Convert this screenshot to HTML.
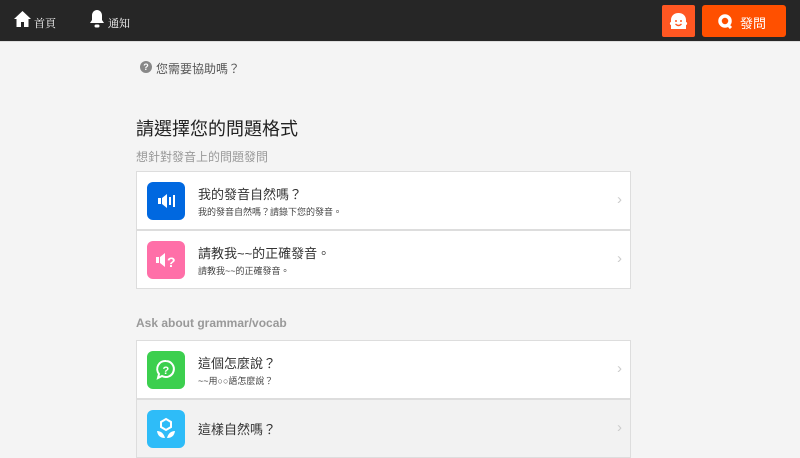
<!DOCTYPE html>
<html><head><meta charset="utf-8"><style>
*{margin:0;padding:0;box-sizing:border-box}
body{width:800px;height:458px;overflow:hidden;background:#f4f4f4;font-family:"Liberation Sans","Noto Sans CJK TC",sans-serif;position:relative}
.hdr{position:absolute;left:0;top:0;width:800px;height:42px;background:#262626;border-bottom:1px solid #ddd}
.t{position:absolute;white-space:nowrap}
.card{position:absolute;left:136px;width:495px;height:59px;background:#fff;border:1px solid #ddd}
.ic{position:absolute;left:10px;top:10px;width:38px;height:38px;border-radius:6px}
.ti{position:absolute;left:61px;top:12px;font-size:13px;color:#333}
.su{position:absolute;left:61px;top:33px;font-size:9px;color:#444}
.ar{position:absolute;right:8px;top:19px;font-size:15px;color:#ccc}
</style></head><body>
<div class="hdr">
<svg style="position:absolute;left:14px;top:11px" width="17" height="16" viewBox="0 0 17 16"><path d="M8.5 0L0 8h2.5v8h4.5v-5h3v5h4.5V8H17z" fill="#fff"/></svg>
<div class="t" style="left:34px;top:15px;font-size:11px;color:#fff;font-family:'Noto Serif CJK SC',serif">首頁</div>
<svg style="position:absolute;left:89px;top:10px" width="16" height="18" viewBox="0 0 16 18"><path d="M8 0c-3 0-5 2.5-5 5.5V10L1 13h14l-2-3V5.5C13 2.5 11 0 8 0z" fill="#fff"/><rect x="5.5" y="14.5" width="5" height="3" rx="1.5" fill="#fff"/></svg>
<div class="t" style="left:108px;top:15px;font-size:11px;color:#fff;font-family:'Noto Serif CJK SC',serif">通知</div>
<div style="position:absolute;left:662px;top:5px;width:33px;height:32px;background:#ff5722;border-radius:2px">
<svg style="position:absolute;left:7px;top:7px" width="19" height="18" viewBox="0 0 19 18"><path d="M9.5 1C5 1 2 4 2 8v2c-1.5 0-1.5 3 0 3v4h15v-4c1.5 0 1.5-3 0-3V8c0-4-3-7-7.5-7z" fill="#fff"/><circle cx="7" cy="9" r="1" fill="#ff5722"/><circle cx="12" cy="9" r="1" fill="#ff5722"/><path d="M6.5 12q3 3 6 0" stroke="#ff5722" stroke-width="1.3" fill="none"/></svg></div>
<div style="position:absolute;left:702px;top:5px;width:84px;height:32px;background:#ff5000;border-radius:3px">
<svg style="position:absolute;left:16px;top:9px" width="15" height="15" viewBox="0 0 15 15"><circle cx="7" cy="7" r="5" stroke="#fff" stroke-width="3.5" fill="none"/><path d="M9 10l4 4" stroke="#fff" stroke-width="3"/></svg>
<div class="t" style="left:38px;top:8px;font-size:13px;color:#fff">發問</div></div>
</div>
<div class="t" style="left:140px;top:61px;width:12px;height:12px;border-radius:50%;background:#888;color:#fff;font-size:9px;font-weight:bold;text-align:center;line-height:12px">?</div>
<div class="t" style="left:156px;top:60px;font-size:12px;color:#555">您需要協助嗎？</div>
<div class="t" style="left:136px;top:115px;font-size:18px;color:#222">請選擇您的問題格式</div>
<div class="t" style="left:136px;top:148px;font-size:12px;color:#999">想針對發音上的問題發問</div>
<div class="card" style="top:171px"><div class="ic" style="background:#0068e0"><svg width="38" height="38" viewBox="0 0 38 38"><path d="M11 16h3v6h-3zM15 16l5-4v14l-5-4z" fill="#fff"/><rect x="22" y="15" width="2" height="8" fill="#fff"/><rect x="26" y="13" width="2" height="12" fill="#fff"/></svg></div><div class="ti">我的發音自然嗎？</div><div class="su">我的發音自然嗎？請錄下您的發音。</div><div class="ar">›</div></div>
<div class="card" style="top:230px"><div class="ic" style="background:#ff6fa8"><svg width="38" height="38" viewBox="0 0 38 38"><path d="M9 16h3v6H9zM13 16l5-4v14l-5-4z" fill="#fff"/><text x="20" y="26" font-size="14" font-weight="bold" fill="#fff" font-family="Liberation Sans">?</text></svg></div><div class="ti">請教我~~的正確發音。</div><div class="su">請教我~~的正確發音。</div><div class="ar">›</div></div>
<div class="t" style="left:136px;top:316px;font-size:12px;color:#999;font-weight:bold">Ask about grammar/vocab</div>
<div class="card" style="top:340px"><div class="ic" style="background:#3ccf4e"><svg width="38" height="38" viewBox="0 0 38 38"><path d="M19 10a8 8 0 1 1-4 15l-4 2 1-4a8 8 0 0 1 7-13z" stroke="#fff" stroke-width="2" fill="none"/><text x="15.5" y="23" font-size="11" font-weight="bold" fill="#fff" font-family="Liberation Sans">?</text></svg></div><div class="ti">這個怎麼說？</div><div class="su">~~用○○語怎麼說？</div><div class="ar">›</div></div>
<div class="card" style="top:399px;background:#f2f2f2"><div class="ic" style="background:#2ebcf8"><svg width="38" height="38" viewBox="0 0 38 38"><path d="M19 9l5 3v5l-5 3-5-3v-5z" stroke="#fff" stroke-width="2" fill="none"/><path d="M10 21q6 0 8 7q-7 0-8-7zM28 21q-6 0-8 7q7 0 8-7z" fill="#fff"/></svg></div><div class="ti" style="top:19px">這樣自然嗎？</div><div class="ar">›</div></div>
</body></html>
